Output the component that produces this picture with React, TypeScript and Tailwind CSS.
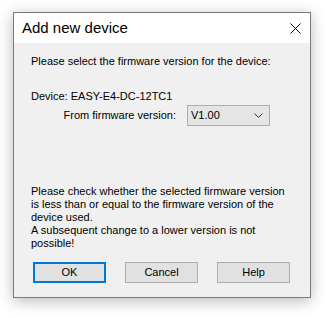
import React from "react";

function Button({ label, primary }: { label: string; primary?: boolean }) {
  return (
    <button
      className={
        "w-[73px] h-[21px] bg-[#e1e1e1] text-[11px] leading-none text-black flex items-center justify-center " +
        (primary ? "border-2 border-[#0078d7]" : "border border-[#adadad]")
      }
    >
      {label}
    </button>
  );
}

export default function App() {
  return (
    <div className="w-[329px] h-[318px] bg-white pt-[12px] pl-[13px] font-['Liberation_Sans',Arial,sans-serif]">
      <div className="w-[298px] h-[286px] border border-[#7a7a7a] bg-[#f0f0f0] flex flex-col shadow-[0_3px_14px_rgba(0,0,0,0.28)]">
        <div className="h-[30px] bg-white flex items-center justify-between pl-[8px] pr-[9px]">
          <span className="text-[15px] text-black">Add new device</span>
          <svg width="11" height="11" viewBox="0 0 11 11">
            <path d="M0.5 0.5 L10.5 10.5 M10.5 0.5 L0.5 10.5" stroke="#000" strokeWidth="1" fill="none" />
          </svg>
        </div>
        <div className="flex flex-col pt-[12px] pl-[17px] text-[11px] leading-[13px] text-black">
          <p className="whitespace-nowrap">Please select the firmware version for the device:</p>
          <p className="mt-[22px] whitespace-nowrap">Device: EASY-E4-DC-12TC1</p>
          <div className="mt-[2px] flex items-center gap-[11px]">
            <span className="w-[145px] text-right whitespace-nowrap">From firmware version:</span>
            <div className="w-[83px] h-[21px] bg-[#e5e5e5] border border-[#adadad] flex items-center justify-between pl-[3px] pr-[6px]">
              <span>V1.00</span>
              <svg width="9" height="5" viewBox="0 0 9 5">
                <path d="M0.5 0.5 L4.5 4.5 L8.5 0.5" stroke="#333" strokeWidth="1" fill="none" />
              </svg>
            </div>
          </div>
          <p className="mt-[59px] whitespace-nowrap">
            Please check whether the selected firmware version
            <br />
            is less than or equal to the firmware version of the
            <br />
            device used.
            <br />
            A subsequent change to a lower version is not
            <br />
            possible!
          </p>
          <div className="mt-[12px] pl-[2px] flex gap-[19px]">
            <Button label="OK" primary />
            <Button label="Cancel" />
            <Button label="Help" />
          </div>
        </div>
      </div>
    </div>
  );
}
